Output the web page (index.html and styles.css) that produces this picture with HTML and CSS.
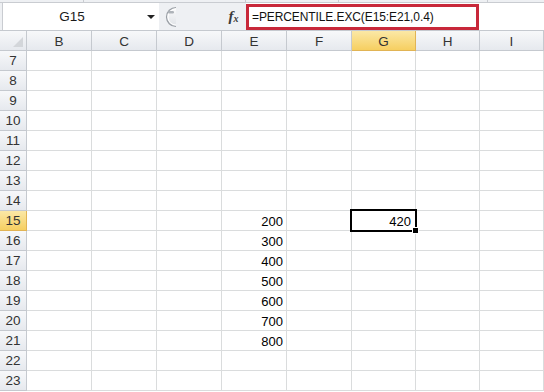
FILE: index.html
```html
<!DOCTYPE html>
<html lang="en">

<head>
  <meta charset="UTF-8">
  <title>PERCENTILE.EXC</title>
  <link rel="stylesheet" href="styles.css">
</head>

<body>
  <div class="ribbon-edge">
    <span class="seg seg-a"></span>
    <span class="seg seg-b"></span>
    <span class="seg seg-c"></span>
    <span class="seg seg-d"></span>
  </div>

  <div class="fbar">
    <div class="namebox">
      <span class="name">G15</span>
      <span class="arrow"></span>
    </div>
    <div class="splitter">
      <svg width="16" height="22" viewBox="0 0 16 22">
        <defs>
          <linearGradient id="knob" x1="0" y1="0" x2="0" y2="1">
            <stop offset="0" stop-color="#fbfbfc"/>
            <stop offset="1" stop-color="#dfe2e6"/>
          </linearGradient>
        </defs>
        <path d="M15 1.5 A9.5 9.5 0 0 0 15 20.5" fill="url(#knob)" stroke="#9a9fa5" stroke-width="1.2"/>
        <path d="M15 3 A8 8 0 0 0 15 19" fill="none" stroke="#ffffff" stroke-width="1"/>
        <rect x="7" y="5" width="6" height="2.5" rx="1.2" fill="#aeb3b9"/>
      </svg>
    </div>
    <div class="fx"><i>f</i><sub>x</sub></div>
    <div class="formula">
      <div class="formula-text">=PERCENTILE.EXC(E15:E21,0.4)</div>
    </div>
  </div>

  <div class="sheet">
    <div class="hd corner"><span class="tri"></span></div>
    <div class="hd col">B</div>
    <div class="hd col">C</div>
    <div class="hd col">D</div>
    <div class="hd col">E</div>
    <div class="hd col">F</div>
    <div class="hd col sel">G</div>
    <div class="hd col">H</div>
    <div class="hd col last">I</div>

    <div class="hd row">7</div><div class="c"></div><div class="c"></div><div class="c"></div><div class="c"></div><div class="c"></div><div class="c"></div><div class="c"></div><div class="c"></div>
    <div class="hd row">8</div><div class="c"></div><div class="c"></div><div class="c"></div><div class="c"></div><div class="c"></div><div class="c"></div><div class="c"></div><div class="c"></div>
    <div class="hd row">9</div><div class="c"></div><div class="c"></div><div class="c"></div><div class="c"></div><div class="c"></div><div class="c"></div><div class="c"></div><div class="c"></div>
    <div class="hd row">10</div><div class="c"></div><div class="c"></div><div class="c"></div><div class="c"></div><div class="c"></div><div class="c"></div><div class="c"></div><div class="c"></div>
    <div class="hd row">11</div><div class="c"></div><div class="c"></div><div class="c"></div><div class="c"></div><div class="c"></div><div class="c"></div><div class="c"></div><div class="c"></div>
    <div class="hd row">12</div><div class="c"></div><div class="c"></div><div class="c"></div><div class="c"></div><div class="c"></div><div class="c"></div><div class="c"></div><div class="c"></div>
    <div class="hd row">13</div><div class="c"></div><div class="c"></div><div class="c"></div><div class="c"></div><div class="c"></div><div class="c"></div><div class="c"></div><div class="c"></div>
    <div class="hd row">14</div><div class="c"></div><div class="c"></div><div class="c"></div><div class="c"></div><div class="c"></div><div class="c"></div><div class="c"></div><div class="c"></div>
    <div class="hd row sel">15</div><div class="c"></div><div class="c"></div><div class="c"></div><div class="c num">200</div><div class="c"></div><div class="c num active">420<span class="handle"></span></div><div class="c"></div><div class="c"></div>
    <div class="hd row">16</div><div class="c"></div><div class="c"></div><div class="c"></div><div class="c num">300</div><div class="c"></div><div class="c"></div><div class="c"></div><div class="c"></div>
    <div class="hd row">17</div><div class="c"></div><div class="c"></div><div class="c"></div><div class="c num">400</div><div class="c"></div><div class="c"></div><div class="c"></div><div class="c"></div>
    <div class="hd row">18</div><div class="c"></div><div class="c"></div><div class="c"></div><div class="c num">500</div><div class="c"></div><div class="c"></div><div class="c"></div><div class="c"></div>
    <div class="hd row">19</div><div class="c"></div><div class="c"></div><div class="c"></div><div class="c num">600</div><div class="c"></div><div class="c"></div><div class="c"></div><div class="c"></div>
    <div class="hd row">20</div><div class="c"></div><div class="c"></div><div class="c"></div><div class="c num">700</div><div class="c"></div><div class="c"></div><div class="c"></div><div class="c"></div>
    <div class="hd row">21</div><div class="c"></div><div class="c"></div><div class="c"></div><div class="c num">800</div><div class="c"></div><div class="c"></div><div class="c"></div><div class="c"></div>
    <div class="hd row">22</div><div class="c"></div><div class="c"></div><div class="c"></div><div class="c"></div><div class="c"></div><div class="c"></div><div class="c"></div><div class="c"></div>
    <div class="hd row">23</div><div class="c"></div><div class="c"></div><div class="c"></div><div class="c"></div><div class="c"></div><div class="c"></div><div class="c"></div><div class="c"></div>
  </div>
</body>

</html>
```

FILE: styles.css
```css
html,
body {
  margin: 0;
  padding: 0;
  overflow: hidden;
  background: #ffffff;
}

body {
  width: 544px;
  height: 392px;
  font-family: "Liberation Sans", Arial, sans-serif;
  font-size: 13px;
  color: #000000;
}

/* strip left over from the ribbon */
.ribbon-edge {
  position: relative;
  height: 3px;
  background: #eef0f3;
  border-bottom: 1px solid #c9ccd1;
  box-sizing: border-box;
}

.ribbon-edge .seg {
  position: absolute;
  top: 0;
  bottom: 0;
  border-left: 1px solid #c9ccd1;
}

.seg-a { left: 83px; }
.seg-b { left: 245px; }
.seg-c { left: 338px; }
.seg-d { left: 487px; }

/* formula bar */
.fbar {
  display: flex;
  height: 28px;
  background: #eef0f3;
  border-bottom: 1px solid #c5c9cf;
  box-sizing: border-box;
}

.namebox {
  display: flex;
  align-items: center;
  width: 157px;
  margin-left: 2px;
  background: #ffffff;
  border-left: 1px solid #c9ccd1;
  box-sizing: border-box;
}

.namebox .name {
  flex: 1;
  text-align: center;
  padding-right: 6px;
  font-size: 13.5px;
  color: #1a1a1a;
}

.namebox .arrow {
  width: 0;
  height: 0;
  margin-right: 4px;
  border-left: 4px solid transparent;
  border-right: 4px solid transparent;
  border-top: 4px solid #222222;
}

.splitter {
  display: flex;
  align-items: center;
  padding-left: 2px;
  width: 62px;
  box-sizing: border-box;
}

.splitter svg {
  display: block;
}

.fx {
  width: 25px;
  font-family: "Liberation Serif", "Times New Roman", serif;
  font-size: 15px;
  font-weight: bold;
  color: #3a3a3a;
  padding-top: 5px;
  box-sizing: border-box;
  text-align: center;
}

.fx sub {
  font-size: 10px;
  font-style: italic;
  vertical-align: -1px;
}

.formula {
  flex: 1;
  background: #ffffff;
  padding-top: 1px;
}

.formula-text {
  width: 233px;
  height: 26px;
  border: 3px solid #c8283a;
  box-sizing: border-box;
  padding-left: 3px;
  line-height: 20px;
  font-size: 12px;
  letter-spacing: -0.1px;
  color: #111111;
  white-space: nowrap;
}

/* sheet grid */
.sheet {
  display: grid;
  grid-template-columns: 27px 65px 65px 65px 65px 65px 64px 64px 64px;
  grid-auto-rows: 20px;
}

.sheet > div {
  box-sizing: border-box;
  border-right: 1px solid #dadcdd;
  border-bottom: 1px solid #dadcdd;
}

.hd {
  display: flex;
  align-items: center;
  justify-content: center;
  background: linear-gradient(#f7f8fa, #e6e9ee);
  color: #333333;
  font-size: 13.5px;
  border-right-color: #c5c9cf !important;
  border-bottom-color: #c5c9cf !important;
}

.hd.col {
  padding-top: 1px;
}

.hd.sel {
  background: linear-gradient(#fbe8a6, #f6cf61);
  border-right-color: #e1b455 !important;
  border-bottom-color: #e1b455 !important;
}

.corner {
  position: relative;
}

.corner .tri {
  position: absolute;
  right: 3px;
  bottom: 3px;
  width: 0;
  height: 0;
  border-left: 10px solid transparent;
  border-bottom: 10px solid #d3d6da;
}

.c.num {
  display: flex;
  align-items: center;
  justify-content: flex-end;
  padding-right: 3px;
  padding-top: 1px;
}

.c.active {
  position: relative;
  padding-right: 4px;
}

.c.active::after {
  content: "";
  position: absolute;
  left: -2px;
  top: -2px;
  right: -2px;
  bottom: -2px;
  border: 2px solid #000000;
}

.c.active .handle {
  position: absolute;
  right: -4px;
  bottom: -4px;
  width: 5px;
  height: 5px;
  background: #000000;
  border: 1px solid #ffffff;
  z-index: 2;
}
```
